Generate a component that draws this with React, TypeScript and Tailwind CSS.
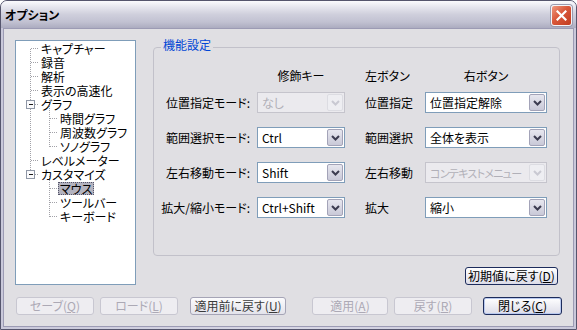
import React from "react";

const FONT =
  "font-['Noto_Sans_CJK_JP','Noto_Sans_CJK_SC',sans-serif] [font-feature-settings:'palt']";

function Chevron({ disabled }: { disabled?: boolean }) {
  return (
    <svg width="9" height="6" viewBox="0 0 9 6">
      <path
        d="M1 1 L4.5 4.5 L8 1"
        fill="none"
        stroke={disabled ? "#c9c9d2" : "#3c3c50"}
        strokeWidth="2"
      />
    </svg>
  );
}

function Combo({
  value,
  wide,
  disabled,
  tight,
}: {
  value: string;
  wide?: boolean;
  disabled?: boolean;
  tight?: boolean;
}) {
  return (
    <div
      className={
        "flex h-[21px] border p-[1px] " +
        (wide ? "w-[122px] " : "w-[88px] ") +
        (disabled ? "border-[#c5c4cc] bg-[#ebeaee]" : "border-[#7f9db9] bg-white")
      }
    >
      <div
        className={
          "flex-1 flex items-center pl-[3px] leading-[14px] whitespace-nowrap overflow-hidden " +
          (tight ? "text-[11px] tracking-[-0.7px] " : "") +
          (disabled ? "text-[#b1b0b8]" : "text-black")
        }
      >
        {value}
      </div>
      <div
        className={
          "w-[16px] h-full shrink-0 rounded-[2px] border flex items-center justify-center " +
          (disabled
            ? "border-[#dcdce2] bg-[#eeeef2]"
            : "border-[#a3a3b8] bg-[linear-gradient(to_bottom,#e7e7ef,#c9c9d8)]")
        }
      >
        <Chevron disabled={disabled} />
      </div>
    </div>
  );
}

type BtnKind = "disabled" | "normal" | "dark" | "default";

function Btn({
  label,
  k,
  kind,
  w,
  className = "",
}: {
  label: string;
  k: string;
  kind: BtnKind;
  w: string;
  className?: string;
}) {
  const style =
    kind === "disabled"
      ? "border-[#c8c7d1] bg-[#eeedf1] text-[#aca9b5]"
      : kind === "normal"
      ? "border-[#a5a4b6] bg-[linear-gradient(to_bottom,#fbfbfd,#e3e3eb)] text-[#3a3a3a]"
      : kind === "dark"
      ? "border-[#1d2c5c] bg-[linear-gradient(to_bottom,#ffffff,#dcdce8)] text-black"
      : "border-[#1d2c5c] bg-[linear-gradient(to_bottom,#ffffff,#dcdce8)] text-black shadow-[inset_0_0_0_1px_#b9c9ef]";
  return (
    <div
      className={
        "h-[18px] rounded-[3px] border flex items-center justify-center leading-[14px] whitespace-nowrap " +
        w +
        " " +
        style +
        " " +
        className
      }
    >
      {label}(<u>{k}</u>)
    </div>
  );
}

type Item = { t: string; lvl: 0 | 1; sel?: boolean };
const items: Item[] = [
  { t: "キャプチャー", lvl: 0 },
  { t: "録音", lvl: 0 },
  { t: "解析", lvl: 0 },
  { t: "表示の高速化", lvl: 0 },
  { t: "グラフ", lvl: 0 },
  { t: "時間グラフ", lvl: 1 },
  { t: "周波数グラフ", lvl: 1 },
  { t: "ソノグラフ", lvl: 1 },
  { t: "レベルメーター", lvl: 0 },
  { t: "カスタマイズ", lvl: 0 },
  { t: "マウス", lvl: 1, sel: true },
  { t: "ツールバー", lvl: 1 },
  { t: "キーボード", lvl: 1 },
];

function TreeLines() {
  const c = (i: number) => 14 * i + 7.5;
  const dot = { stroke: "#a2a2a8", strokeWidth: 1, strokeDasharray: "1 1", fill: "none" };
  const roots = [0, 1, 2, 3, 4, 8, 9];
  const kids = [5, 6, 7, 10, 11, 12];
  const box = (i: number) => (
    <g key={"b" + i}>
      <rect x={10.5} y={c(i) - 4} width={8} height={8} fill="#fafafc" stroke="#8f97a6" />
      <path d={`M12.5 ${c(i)} H16.5`} stroke="#1a1a1a" strokeWidth={1} />
    </g>
  );
  return (
    <svg className="absolute left-0 top-0 pointer-events-none" width="119" height="243" shapeRendering="crispEdges">
      <path d={`M14.5 ${c(0)} V${c(9)}`} style={dot} />
      {roots.map((i) => (
        <path key={"r" + i} d={`M15 ${c(i)} H23`} style={dot} />
      ))}
      <path d={`M33.5 ${c(4) + 1} V${c(7)}`} style={dot} />
      <path d={`M33.5 ${c(9) + 1} V${c(12)}`} style={dot} />
      {kids.map((i) => (
        <path key={"k" + i} d={`M34 ${c(i)} H42`} style={dot} />
      ))}
      {box(4)}
      {box(9)}
    </svg>
  );
}

function Tree() {
  return (
    <div className="relative w-[121px] h-[245px] border border-[#7f9db9] bg-white shrink-0">
      <TreeLines />
      <div className="relative flex flex-col">
        {items.map((it, i) => (
          <div
            key={i}
            className={"h-[14px] flex items-center " + (it.lvl === 0 ? "pl-[23px]" : "pl-[42px]")}
          >
            <span
              className={
                "inline-block h-[13px] leading-[13px] px-[2px] whitespace-nowrap " +
                (it.sel ? "bg-[#b3b3bf] outline outline-1 outline-dotted outline-[#55556a] -outline-offset-1" : "")
              }
            >
              {it.t}
            </span>
          </div>
        ))}
      </div>
    </div>
  );
}

function Row({
  label,
  mod,
  modDisabled,
  lbl2,
  right,
  rightDisabled,
  tight,
}: {
  label: string;
  mod: string;
  modDisabled?: boolean;
  lbl2: string;
  right: string;
  rightDisabled?: boolean;
  tight?: boolean;
}) {
  return (
    <div className="flex items-center h-[21px]">
      <div className="w-[96px] text-right whitespace-nowrap leading-[14px]">{label}</div>
      <div className="ml-[7px]">
        <Combo value={mod} disabled={modDisabled} />
      </div>
      <div className="ml-[20px] w-[60px] whitespace-nowrap leading-[14px]">{lbl2}</div>
      <Combo value={right} wide disabled={rightDisabled} tight={tight} />
    </div>
  );
}

export default function App() {
  return (
    <div className={"w-[577px] h-[330px] bg-white text-[12px] text-black " + FONT}>
      <div className="w-full h-full flex flex-col rounded-t-[7px] border border-[#55556d] bg-[linear-gradient(to_right,#c9c8da,#d7d6e4_50%,#c9c8da)] overflow-hidden">
        <div className="h-[27px] shrink-0 flex items-center justify-between pl-[4px] pr-[4px] bg-[linear-gradient(to_bottom,#fbfbfd_0%,#e6e6ee_22%,#cfcfdc_50%,#c1c1d1_78%,#acacc0_100%)]">
          <span className="font-bold text-[12px] leading-[14px] mt-[1px]">オプション</span>
          <div className="w-[21px] h-[21px] mt-[2px] rounded-[3px] border border-[#f4f4f8] shadow-[0_0_0_1px_#9a9aae] bg-[linear-gradient(135deg,#ef9a80,#d9573a_45%,#c23c20)] flex items-center justify-center">
            <svg width="11" height="11" viewBox="0 0 11 11">
              <path d="M1.5 1.5 L9.5 9.5 M9.5 1.5 L1.5 9.5" stroke="#ffffff" strokeWidth="2.2" strokeLinecap="square" />
            </svg>
          </div>
        </div>
        <div className="flex-1 mx-[2px] mb-[2px] border border-[#9c9bb4] bg-[#e0dfe3] flex flex-col px-[11px] pt-[11px]">
          <div className="flex">
            <Tree />
            <div className="ml-[17px] flex flex-col">
              <div className="relative mt-[7px] w-[407px] h-[209px] border border-[#c2c1ca] rounded-[4px]">
                <span className="absolute -top-[10px] left-[7px] px-[2px] bg-[#e0dfe3] leading-[14px] text-[#0046d5]">
                  機能設定
                </span>
                <div className="flex flex-col pt-[21px]">
                  <div className="flex items-center h-[14px] leading-[14px]">
                    <div className="w-[96px]" />
                    <div className="ml-[7px] w-[88px] text-center">修飾キー</div>
                    <div className="ml-[20px] w-[60px]">左ボタン</div>
                    <div className="w-[122px] text-center">右ボタン</div>
                  </div>
                  <div className="flex flex-col gap-[14px] mt-[9px]">
                    <Row label="位置指定モード:" mod="なし" modDisabled lbl2="位置指定" right="位置指定解除" />
                    <Row label="範囲選択モード:" mod="Ctrl" lbl2="範囲選択" right="全体を表示" />
                    <Row label="左右移動モード:" mod="Shift" lbl2="左右移動" right="コンテキストメニュー" rightDisabled tight />
                    <Row label="拡大/縮小モード:" mod="Ctrl+Shift" lbl2="拡大" right="縮小" />
                  </div>
                </div>
              </div>
              <div className="flex justify-end mt-[11px] mr-[2px]">
                <Btn label="初期値に戻す" k="D" kind="dark" w="w-[93px]" />
              </div>
            </div>
          </div>
          <div className="flex mt-[12px]">
            <Btn label="セーブ" k="Q" kind="disabled" w="w-[78px]" className="ml-[1px]" />
            <Btn label="ロード" k="L" kind="disabled" w="w-[78px]" className="ml-[6px]" />
            <Btn label="適用前に戻す" k="U" kind="normal" w="w-[96px]" className="ml-[12px]" />
            <Btn label="適用" k="A" kind="disabled" w="w-[76px]" className="ml-[26px]" />
            <Btn label="戻す" k="R" kind="disabled" w="w-[78px]" className="ml-[6px]" />
            <Btn label="閉じる" k="C" kind="default" w="w-[79px]" className="ml-[11px]" />
          </div>
        </div>
      </div>
    </div>
  );
}
